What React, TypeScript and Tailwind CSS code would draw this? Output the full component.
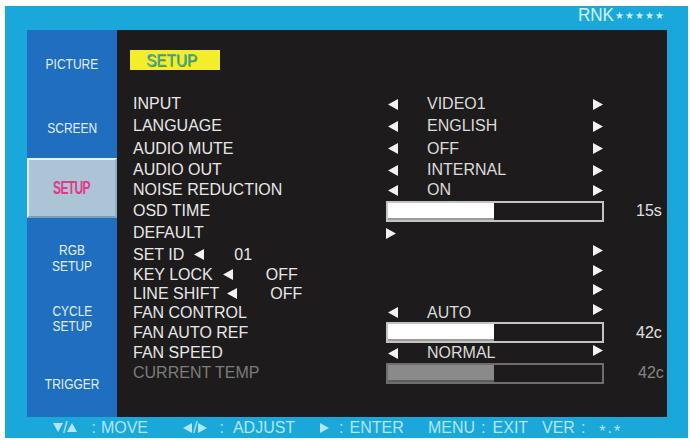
import React from "react";

const TriL = ({ c = "#f2f2f2", w = 10, h = 11 }: { c?: string; w?: number; h?: number }) => (
  <svg width={w} height={h} viewBox="0 0 10 11" className="block shrink-0">
    <polygon points="10,0 10,11 0,5.5" fill={c} />
  </svg>
);
const TriR = ({ c = "#f2f2f2", w = 10, h = 11 }: { c?: string; w?: number; h?: number }) => (
  <svg width={w} height={h} viewBox="0 0 10 11" className="block shrink-0">
    <polygon points="0,0 0,11 10,5.5" fill={c} />
  </svg>
);
const TriD = ({ c }: { c: string }) => (
  <svg width="10" height="9" viewBox="0 0 10 9" className="block shrink-0">
    <polygon points="0,0 10,0 5,9" fill={c} />
  </svg>
);
const TriU = ({ c }: { c: string }) => (
  <svg width="10" height="9" viewBox="0 0 10 9" className="block shrink-0">
    <polygon points="0,9 10,9 5,0" fill={c} />
  </svg>
);

const Bar = ({ dim }: { dim?: boolean }) => (
  <div
    className={`w-[218px] h-[21px] border-2 flex ${dim ? "border-[#6e6e6e]" : "border-[#c4c4c4]"}`}
  >
    <div
      className={`w-[106px] h-full border-b-2 ${dim ? "bg-[#8a8a8a] border-[#5c5c5c]" : "bg-white border-[#9a9a9a]"}`}
    />
  </div>
);

function Row({
  h,
  label,
  dim,
  children,
  extra,
}: {
  h: string;
  label: React.ReactNode;
  dim?: boolean;
  children?: React.ReactNode;
  extra?: React.ReactNode;
}) {
  return (
    <div className={`flex items-center ${h}`}>
      <div
        className={`w-[269px] pl-[16px] text-[16px] leading-none whitespace-nowrap flex items-center ${dim ? "text-[#7c7c7c]" : "text-[#e8e8e8]"}`}
      >
        {label}
      </div>
      <div className="w-[218px] h-full flex items-center">{children}</div>
      <div
        className={`ml-[32px] text-[16px] leading-none ${dim ? "text-[#858585]" : "text-[#e0e0e0]"}`}
      >
        {extra}
      </div>
    </div>
  );
}

const Val = ({ v, rUp }: { v?: string; rUp?: boolean }) => (
  <div className="flex items-center w-full">
    <div className="w-[41px] pl-[2px]">
      <TriL />
    </div>
    <div className="w-[166px] text-[16px] leading-none text-[#dcdcdc]">{v}</div>
    <div className={`w-[11px] ${rUp ? "-translate-y-[3px]" : ""}`}>
      <TriR />
    </div>
  </div>
);

const RightOnly = () => (
  <div className="flex items-center w-full -translate-y-[4px]">
    <div className="w-[207px]" />
    <TriR />
  </div>
);

const SideText = ({
  children,
  cls = "text-[15px] scale-x-[0.8]",
  leading,
}: {
  children: React.ReactNode;
  cls?: string;
  leading: string;
}) => (
  <div className={`inline-block text-[#e4eef8] text-center ${cls} ${leading}`}>{children}</div>
);

export default function App() {
  const fc = "#b3e5f6";
  return (
    <div className="w-[690px] h-[440px] bg-white pt-[6px] pl-[5px] pr-[2px] pb-[2px] font-['Liberation_Sans',Arial,sans-serif]">
      <div className="w-[683px] h-[432px] bg-[#1aa8da] flex flex-col">
        <div className="h-[24px] flex justify-end items-start pr-[23px]">
          <div className="flex items-center">
            <span className="text-[18px] leading-none text-[#d5f1fa] inline-block scale-x-[0.95] origin-right">
              RNK
            </span>
            <span className="text-[10px] leading-none text-[#cdeef9] tracking-[1px] ml-[1px] mt-[2px]">
              ★★★★★
            </span>
          </div>
        </div>

        <div className="h-[387px] flex pl-[22px] pr-[21px]">
          {/* Sidebar */}
          <div className="w-[90px] bg-[#1f6ebf] flex flex-col overflow-hidden">
            <div className="h-[66px] flex items-center justify-center">
              <SideText leading="leading-none">PICTURE</SideText>
            </div>
            <div className="h-[62px] flex items-center justify-center">
              <SideText leading="leading-none">SCREEN</SideText>
            </div>
            <div className="h-[60px] flex items-center justify-center bg-[#abc5d7] border-t-2 border-l-2 border-t-[#e8f3f9] border-l-[#dcebf4] border-b-2 border-r-2 border-b-[#7d9db3] border-r-[#8fb0c4]">
              <span className="inline-block scale-x-[0.67] text-[18px] font-bold leading-none text-[#e23a86] tracking-[-1px]">
                SETUP
              </span>
            </div>
            <div className="h-[80px] flex items-center justify-center">
              <SideText leading="leading-[16px]">
                RGB
                <br />
                SETUP
              </SideText>
            </div>
            <div className="h-[42px] flex items-center justify-center">
              <SideText cls="text-[14px] scale-x-[0.85]" leading="leading-[15px]">
                CYCLE
                <br />
                SETUP
              </SideText>
            </div>
            <div className="flex-1 flex justify-center pt-[36px]">
              <SideText leading="leading-[15px]">TRIGGER</SideText>
            </div>
          </div>

          {/* Panel */}
          <div className="flex-1 bg-[#1d1b1b] flex flex-col pt-[20px]">
            <div className="ml-[13px] w-[90px] h-[20px] bg-[#f4ee2a] flex items-center pl-[16px]">
              <span className="inline-block scale-x-[0.9] origin-left text-[17px] leading-none text-[#3db49c] [text-shadow:1px_1px_0_#7a8a30]">
                SETUP
              </span>
            </div>
            <div className="mt-[23px] flex flex-col">
              <Row h="h-[22px]" label="INPUT">
                <Val v="VIDEO1" />
              </Row>
              <Row h="h-[22px]" label="LANGUAGE">
                <Val v="ENGLISH" />
              </Row>
              <Row h="h-[23px]" label="AUDIO MUTE">
                <Val v="OFF" />
              </Row>
              <Row h="h-[20px]" label="AUDIO OUT">
                <Val v="INTERNAL" />
              </Row>
              <Row h="h-[20px]" label="NOISE REDUCTION">
                <Val v="ON" />
              </Row>
              <Row h="h-[22px]" label="OSD TIME" extra="15s">
                <Bar />
              </Row>
              <Row h="h-[22px]" label="DEFAULT">
                <TriR />
              </Row>
              <Row
                h="h-[21px]"
                label={
                  <>
                    SET ID
                    <span className="ml-[10px]">
                      <TriL />
                    </span>
                    <span className="ml-[30px]">01</span>
                  </>
                }
              >
                <RightOnly />
              </Row>
              <Row
                h="h-[19px]"
                label={
                  <>
                    KEY LOCK
                    <span className="ml-[10px]">
                      <TriL />
                    </span>
                    <span className="ml-[33px]">OFF</span>
                  </>
                }
              >
                <RightOnly />
              </Row>
              <Row
                h="h-[19px]"
                label={
                  <>
                    LINE SHIFT
                    <span className="ml-[8px]">
                      <TriL />
                    </span>
                    <span className="ml-[33px]">OFF</span>
                  </>
                }
              >
                <RightOnly />
              </Row>
              <Row h="h-[19px]" label="FAN CONTROL">
                <Val v="AUTO" rUp />
              </Row>
              <Row h="h-[21px]" label="FAN AUTO REF" extra="42c">
                <Bar />
              </Row>
              <Row h="h-[20px]" label="FAN SPEED">
                <Val v="NORMAL" rUp />
              </Row>
              <Row h="h-[20px]" label="CURRENT TEMP" dim extra={<span className="ml-[2px]">42c</span>}>
                <Bar dim />
              </Row>
            </div>
          </div>
        </div>

        {/* Footer */}
        <div className="h-[21px] flex items-center pl-[48px] text-[16px] leading-none text-[#b3e5f6]">
          <div className="w-[130px] flex items-center">
            <TriD c={fc} />
            <span>/</span>
            <TriU c={fc} />
            <span className="ml-[14px]">:</span>
            <span className="ml-[5px]">MOVE</span>
          </div>
          <div className="w-[137px] flex items-center">
            <TriL c={fc} w={9} h={10} />
            <span className="mx-[1px]">/</span>
            <TriR c={fc} w={9} h={10} />
            <span className="ml-[12px]">:</span>
            <span className="ml-[9px]">ADJUST</span>
          </div>
          <div className="w-[108px] flex items-center">
            <TriR c={fc} w={9} h={10} />
            <span className="ml-[10px]">:</span>
            <span className="ml-[6px]">ENTER</span>
          </div>
          <div className="w-[114px] flex items-center">
            <span>MENU</span>
            <span className="ml-[6px]">:</span>
            <span className="ml-[7px]">EXIT</span>
          </div>
          <div className="flex items-center">
            <span>VER</span>
            <span className="ml-[6px]">:</span>
            <span className="ml-[14px] relative top-[4px]">*</span>
            <span className="mx-[2px]">.</span>
            <span className="relative top-[4px]">*</span>
          </div>
        </div>
      </div>
    </div>
  );
}
